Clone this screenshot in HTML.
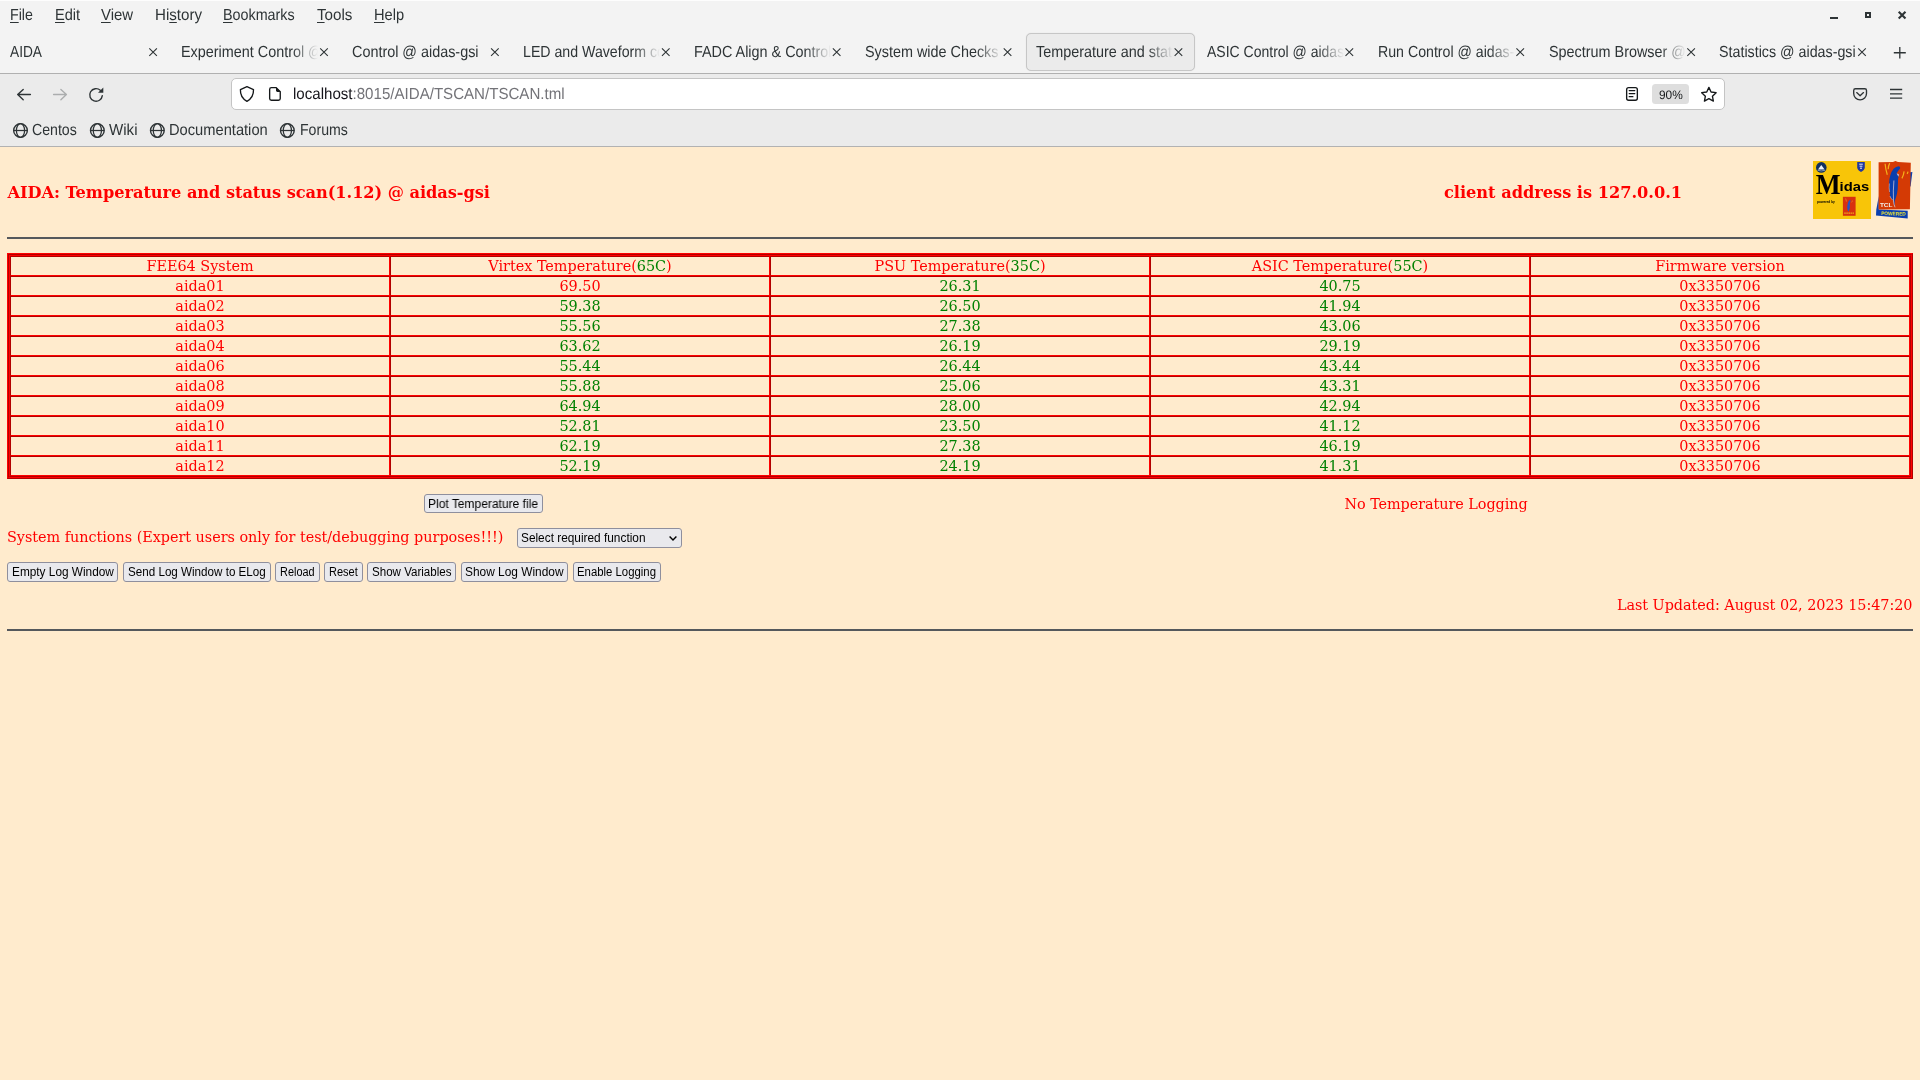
<!DOCTYPE html>
<html lang="en"><head><meta charset="utf-8"><title>Temperature and status scan @ aidas-gsi</title>
<style>
*{box-sizing:border-box;margin:0;padding:0}
html,body{width:1920px;height:1080px;overflow:hidden;background:#ffebcd}
body{position:relative;font-family:"Liberation Sans","DejaVu Sans",sans-serif;color:#2e3436}
.abs,.t,.s{position:absolute;white-space:nowrap}
.t{font-family:"Liberation Sans","DejaVu Sans",sans-serif;font-size:16px;line-height:20px;color:#2e3436;text-rendering:geometricPrecision}
.s{font-family:"DejaVu Serif","Liberation Serif",serif;font-size:14.4px;line-height:18px;color:#f00}
.g{color:#008000}
.tb{position:absolute;left:10px;top:256px;width:1900px;border-collapse:separate;border-spacing:0;table-layout:fixed;font-family:"DejaVu Serif","Liberation Serif",serif;font-size:14.4px;color:#f00}
.tb th,.tb td{width:380px;height:20px;padding:0;border:1px solid;border-color:#b20000 #ff0000 #ff0000 #b20000;text-align:center;vertical-align:top;line-height:18px;font-weight:normal;white-space:nowrap}
.tb td.g{color:#008000}
u{text-decoration:underline;text-underline-offset:2px;text-decoration-thickness:1px}
#w{position:absolute;left:0;top:0;width:1920px;height:1080px;will-change:transform}
#top{left:0;top:0;width:1920px;height:73px;background:#f3f3f3;border-top:1px solid #fdfdfd}
#tabline{left:0;top:73px;width:1920px;height:1px;background:#b0b0b0}
#nav{left:0;top:74px;width:1920px;height:72px;background:#ebebeb}
#navline{left:0;top:146px;width:1920px;height:1px;background:#b2b2b2}
#url{left:231px;top:78px;width:1494px;height:32px;background:#fff;border:1px solid #c4c4c4;border-radius:5px}
#acttab{left:1026px;top:33px;width:169px;height:38px;background:#ebebeb;border:1px solid #c6c6c6;border-radius:5px;box-shadow:0 0 1px rgba(0,0,0,.15)}
.lbl{overflow:hidden;height:22px}
.fade{-webkit-mask-image:linear-gradient(to right,#000 0,#000 calc(100% - 26px),transparent 100%);mask-image:linear-gradient(to right,#000 0,#000 calc(100% - 26px),transparent 100%)}
svg{position:absolute;overflow:visible}
.btn{position:absolute;display:block;-webkit-appearance:none;appearance:none;font:inherit;text-align:left;overflow:visible;cursor:default;background:#e9e9ed;border:1px solid #8f8f9d;border-radius:3px}
.btn span{position:absolute;transform-origin:0 0;white-space:nowrap;font-family:"Liberation Sans","DejaVu Sans",sans-serif;font-size:12.3px;line-height:16px;color:#000}
.hr{position:absolute;left:7px;width:1906px;height:2px;border:0;background:#55585c}
</style></head>
<body>
<div id="w">
<div class="abs" id="top"></div><div class="abs" id="tabline"></div><div class="abs" id="nav"></div><div class="abs" id="navline"></div>
<div class="t" style="left:10.4px;top:5.6px;font-size:16px;transform:scaleX(0.8883);transform-origin:0 0;"><u>F</u>ile</div>
<div class="t" style="left:54.6px;top:5.6px;font-size:16px;transform:scaleX(0.9104);transform-origin:0 0;"><u>E</u>dit</div>
<div class="t" style="left:101.2px;top:5.6px;font-size:16px;transform:scaleX(0.9334);transform-origin:0 0;"><u>V</u>iew</div>
<div class="t" style="left:154.8px;top:5.6px;font-size:16px;transform:scaleX(0.9442);transform-origin:0 0;">Hi<u>s</u>tory</div>
<div class="t" style="left:223.1px;top:5.6px;font-size:16px;transform:scaleX(0.8948);transform-origin:0 0;"><u>B</u>ookmarks</div>
<div class="t" style="left:316.7px;top:5.6px;font-size:16px;transform:scaleX(0.9478);transform-origin:0 0;"><u>T</u>ools</div>
<div class="t" style="left:374.0px;top:5.6px;font-size:16px;transform:scaleX(0.9148);transform-origin:0 0;"><u>H</u>elp</div>
<div class="abs" style="left:1830px;top:17px;width:8px;height:2px;background:#2e3436"></div><div class="abs" style="left:1865px;top:12px;width:6px;height:6px;border:2px solid #2e3436"></div>
<div class="abs" id="acttab"></div>
<div class="t lbl" style="left:10.4px;top:42.6px;width:137px"><span style="display:inline-block;transform:scaleX(0.857);transform-origin:0 0">AIDA</span></div>
<div class="t lbl fade" style="left:181.3px;top:42.6px;width:137px"><span style="display:inline-block;transform:scaleX(0.899);transform-origin:0 0">Experiment Control @ aidas-gsi</span></div>
<div class="t lbl" style="left:352.2px;top:42.6px;width:137px"><span style="display:inline-block;transform:scaleX(0.899);transform-origin:0 0">Control @ aidas-gsi</span></div>
<div class="t lbl fade" style="left:523.1px;top:42.6px;width:137px"><span style="display:inline-block;transform:scaleX(0.885);transform-origin:0 0">LED and Waveform control @ aidas-gsi</span></div>
<div class="t lbl fade" style="left:694.0px;top:42.6px;width:137px"><span style="display:inline-block;transform:scaleX(0.899);transform-origin:0 0">FADC Align &amp; Control @ aidas-gsi</span></div>
<div class="t lbl fade" style="left:864.9px;top:42.6px;width:137px"><span style="display:inline-block;transform:scaleX(0.899);transform-origin:0 0">System wide Checks @ aidas-gsi</span></div>
<div class="t lbl fade" style="left:1035.8px;top:42.6px;width:137px"><span style="display:inline-block;transform:scaleX(0.899);transform-origin:0 0">Temperature and status scan @ aidas-gsi</span></div>
<div class="t lbl fade" style="left:1206.7px;top:42.6px;width:137px"><span style="display:inline-block;transform:scaleX(0.875);transform-origin:0 0">ASIC Control @ aidas-gsi</span></div>
<div class="t lbl fade" style="left:1377.6px;top:42.6px;width:137px"><span style="display:inline-block;transform:scaleX(0.885);transform-origin:0 0">Run Control @ aidas-gsi</span></div>
<div class="t lbl fade" style="left:1548.5px;top:42.6px;width:137px"><span style="display:inline-block;transform:scaleX(0.899);transform-origin:0 0">Spectrum Browser @ aidas-gsi</span></div>
<div class="t lbl" style="left:1719.4px;top:42.6px;width:137px"><span style="display:inline-block;transform:scaleX(0.892);transform-origin:0 0">Statistics @ aidas-gsi</span></div>
<div class="abs" id="url"></div>
<div class="abs" style="left:1652px;top:84px;width:37px;height:20px;background:#dedede;border-radius:3.5px"></div><div class="t" style="left:292.9px;top:85.3px;font-size:16px;transform:scaleX(0.9428);transform-origin:0 0;color:#15141a;">localhost<span style="color:#737378">:8015/AIDA/TSCAN/TSCAN.tml</span></div>
<div class="t" style="left:1658.9px;top:85.2px;font-size:12.3px;transform:scaleX(0.9668);transform-origin:0 0;color:#15181a;">90%</div>
<svg style="left:0;top:0" width="1920" height="147" viewBox="0 0 1920 147"><path d="M1898.7 11.8 L1905.5 18.6 M1905.5 11.8 L1898.7 18.6" stroke="#2e3436" stroke-width="2.1" fill="none" />
<path d="M149.30 48.30 L156.90 55.90 M156.90 48.30 L149.30 55.90" stroke="#2e3436" stroke-width="1.1" fill="none" />
<path d="M320.19 48.30 L327.79 55.90 M327.79 48.30 L320.19 55.90" stroke="#2e3436" stroke-width="1.1" fill="none" />
<path d="M491.08 48.30 L498.68 55.90 M498.68 48.30 L491.08 55.90" stroke="#2e3436" stroke-width="1.1" fill="none" />
<path d="M661.97 48.30 L669.57 55.90 M669.57 48.30 L661.97 55.90" stroke="#2e3436" stroke-width="1.1" fill="none" />
<path d="M832.86 48.30 L840.46 55.90 M840.46 48.30 L832.86 55.90" stroke="#2e3436" stroke-width="1.1" fill="none" />
<path d="M1003.75 48.30 L1011.35 55.90 M1011.35 48.30 L1003.75 55.90" stroke="#2e3436" stroke-width="1.1" fill="none" />
<path d="M1174.64 48.30 L1182.24 55.90 M1182.24 48.30 L1174.64 55.90" stroke="#2e3436" stroke-width="1.1" fill="none" />
<path d="M1345.53 48.30 L1353.13 55.90 M1353.13 48.30 L1345.53 55.90" stroke="#2e3436" stroke-width="1.1" fill="none" />
<path d="M1516.42 48.30 L1524.02 55.90 M1524.02 48.30 L1516.42 55.90" stroke="#2e3436" stroke-width="1.1" fill="none" />
<path d="M1687.31 48.30 L1694.91 55.90 M1694.91 48.30 L1687.31 55.90" stroke="#2e3436" stroke-width="1.1" fill="none" />
<path d="M1858.20 48.30 L1865.80 55.90 M1865.80 48.30 L1858.20 55.90" stroke="#2e3436" stroke-width="1.1" fill="none" />
<path d="M1899.8 46.9 V58.6 M1893.8 52.75 H1905.8" stroke="#2e3436" stroke-width="1.3" fill="none" />
<path d="M30.4 94.5 H17.8 M23.2 89.4 L17.7 94.5 L23.2 99.7" stroke="#2e3436" stroke-width="1.4" fill="none" stroke-linecap="round" stroke-linejoin="round"/>
<path d="M53.6 94.5 H66.3 M60.9 89.4 L66.4 94.5 L60.9 99.7" stroke="#abadae" stroke-width="1.4" fill="none" stroke-linecap="round" stroke-linejoin="round"/>
<path d="M102.3 95.6 A6.3 6.3 0 1 1 100.3 90.3" stroke="#2e3436" stroke-width="1.4" fill="none" stroke-linecap="round"/>
<path d="M103.3 87.5 V92.7 H98.0 Z" stroke="#2e3436" stroke-width="0" fill="#2e3436" />
<path d="M246.95 86.7 L253.5 89.6 C253.7 95 251.6 98.9 246.95 101.3 C242.3 98.9 240.2 95 240.4 89.6 Z" stroke="#15181a" stroke-width="1.35" fill="none" stroke-linejoin="round"/>
<path d="M271.4 87.65 H276.2 L280.25 91.7 V98.5 Q280.25 100.25 278.5 100.25 H271.4 Q269.65 100.25 269.65 98.5 V89.4 Q269.65 87.65 271.4 87.65 Z" stroke="#15181a" stroke-width="1.35" fill="none" stroke-linejoin="round"/>
<path d="M276 87.3 L280.6 91.9 H277.4 Q276 91.9 276 90.5 Z" stroke="#2e3436" stroke-width="0" fill="#15181a" />
<rect x="1626.65" y="87.65" width="10.7" height="12.6" rx="2" stroke="#15181a" stroke-width="1.35" fill="none"/>
<path d="M1629.2 90.5 H1634.8 M1629.2 93.6 H1634.8 M1629.2 96.7 H1632.9" stroke="#15181a" stroke-width="1.25" fill="none" stroke-linecap="round"/>
<path d="M1708.90 87.40 L1711.07 92.01 L1716.13 92.65 L1712.42 96.14 L1713.37 101.15 L1708.90 98.70 L1704.43 101.15 L1705.38 96.14 L1701.67 92.65 L1706.73 92.01 Z" stroke="#15181a" stroke-width="1.35" fill="none" stroke-linejoin="round"/>
<path d="M1855.4 88.7 H1864.8 Q1866.5 88.7 1866.5 90.4 V93.5 A6.4 6.4 0 0 1 1853.7 93.5 V90.4 Q1853.7 88.7 1855.4 88.7 Z" stroke="#2e3436" stroke-width="1.35" fill="none" />
<path d="M1856.7 92.6 L1860.1 95.7 L1863.5 92.6" stroke="#2e3436" stroke-width="1.35" fill="none" stroke-linecap="round" stroke-linejoin="round"/>
<path d="M1890 89.5 H1902.2 M1890 93.85 H1902.2 M1890 98.2 H1902.2" stroke="#2e3436" stroke-width="1.3" fill="none" />
<g stroke="#2e3436" fill="none"><circle cx="20.50" cy="130.5" r="6.85" stroke-width="1.4"/><ellipse cx="20.50" cy="130.5" rx="4.1" ry="6.85" stroke-width="1.25"/><path d="M13.65 130.5 H27.35" stroke-width="1.25"/></g>
<g stroke="#2e3436" fill="none"><circle cx="97.35" cy="130.5" r="6.85" stroke-width="1.4"/><ellipse cx="97.35" cy="130.5" rx="4.1" ry="6.85" stroke-width="1.25"/><path d="M90.50 130.5 H104.20" stroke-width="1.25"/></g>
<g stroke="#2e3436" fill="none"><circle cx="157.35" cy="130.5" r="6.85" stroke-width="1.4"/><ellipse cx="157.35" cy="130.5" rx="4.1" ry="6.85" stroke-width="1.25"/><path d="M150.50 130.5 H164.20" stroke-width="1.25"/></g>
<g stroke="#2e3436" fill="none"><circle cx="287.35" cy="130.5" r="6.85" stroke-width="1.4"/><ellipse cx="287.35" cy="130.5" rx="4.1" ry="6.85" stroke-width="1.25"/><path d="M280.50 130.5 H294.20" stroke-width="1.25"/></g></svg>
<div class="t" style="left:32.0px;top:121.4px;font-size:16px;transform:scaleX(0.8838);transform-origin:0 0;">Centos</div>
<div class="t" style="left:108.7px;top:121.4px;font-size:16px;transform:scaleX(0.9433);transform-origin:0 0;">Wiki</div>
<div class="t" style="left:169.0px;top:121.4px;font-size:16px;transform:scaleX(0.9172);transform-origin:0 0;">Documentation</div>
<div class="t" style="left:299.5px;top:121.4px;font-size:16px;transform:scaleX(0.8816);transform-origin:0 0;">Forums</div>

<h2 class="s" style="left:7.4px;top:181px;font-size:16.2px;font-weight:bold;line-height:24px;letter-spacing:-0.045px">AIDA: Temperature and status scan(1.12) @ aidas-gsi</h2>
<div class="s" style="left:1444px;top:181px;font-size:16.2px;font-weight:bold;line-height:24px;letter-spacing:-0.02px">client address is 127.0.0.1</div>
<hr class="hr" style="top:237px">
<svg style="left:1813px;top:161px" width="58" height="58" viewBox="0 0 58 58"><rect width="58" height="58" fill="#f8c508"/>
<circle cx="8.3" cy="6.4" r="5.3" fill="#12305f"/><path d="M5 8.6 L8.3 4 L11.6 8.6 Z" fill="#eef2f6"/><path d="M4.6 9.3 Q8.3 10.6 12 9.3" stroke="#9fb0c4" stroke-width="0.8" fill="none"/>
<path d="M44.2 1.1 H51.8 V6.6 Q51.6 9.4 48 10.9 Q44.4 9.4 44.2 6.6 Z" fill="#2038a0"/><path d="M46.2 3.2 H49.8 M46.6 5.2 H49.4 M47 7.2 H49" stroke="#e6ebf7" stroke-width="1"/>
<text x="2.7" y="32.5" font-family="'Liberation Serif','DejaVu Serif',serif" font-weight="bold" font-size="28.7" fill="#000" textLength="24.8" lengthAdjust="spacingAndGlyphs">M</text>
<text x="26.6" y="29.7" font-family="'Liberation Sans','DejaVu Sans',sans-serif" font-weight="bold" font-size="12.6" fill="#000" textLength="29.6" lengthAdjust="spacingAndGlyphs">idas</text>
<text transform="translate(4.1 41.6) scale(0.2)" font-family="'Liberation Sans','DejaVu Sans',sans-serif" font-weight="bold" font-size="17" fill="#000" textLength="89" lengthAdjust="spacingAndGlyphs">powered by</text>
<rect x="29.9" y="35.8" width="12.7" height="19" fill="#d8310f"/><path d="M37.2 38.8 Q35.4 39.6 34.8 42.5 Q33.8 46 34.6 49 L35.6 50.6 Q37.4 46.5 36.8 42.4 Q37.8 40.6 37.2 38.8 Z" fill="#2354c8"/><path d="M31.2 52.1 H41" stroke="#efa81a" stroke-width="1.2" stroke-dasharray="1.6 0.5"/><path d="M32.6 37.4 Q33.2 39 33.4 40.6 M39.4 39.6 Q39.2 40.6 38.6 41.4" stroke="#f0a020" stroke-width="0.6" fill="none"/>
</svg>
<svg style="left:1876px;top:161px" width="37" height="58" viewBox="0 0 37 58">
<path d="M2.8 35 L2.8 48.6 L31.7 49.8 L31.7 57.4 L0 54.6 L0.3 48.6 Z" fill="#0a3fb0"/><path d="M34 11.2 L36.4 10.9 L34.6 25.5 L34 25.5 Z" fill="#0a3fb0"/>
<path d="M2.6 1.2 L17 0.9 L19.4 0.1 L22 0.9 L34.8 1.8 L33.9 48.2 L2.6 48.5 Z" fill="#d43a05"/>
<path d="M22.9 5.2 Q24.6 5.6 24.1 7.4 Q22.2 9.4 20.6 12.2 L23 13.6 Q21.6 18 21.9 23.5 Q22 28.5 21 32.8 Q20.2 36.5 18.7 40 L18.9 46.2 Q18 42.5 17.2 39.4 Q14.6 37.5 13.8 35 Q14.4 32.5 13.3 30 Q12.6 26 13.1 22.3 Q13.2 18 14.3 14.3 Q15.4 10.4 17.6 7.8 Q20 5.2 22.9 5.2 Z" fill="#0a3fad"/>
<path d="M17.9 19.5 Q17 30 17.5 40 Q17.9 43.5 19 46.3" stroke="#e6d6d8" stroke-width="0.7" fill="none"/>
<path d="M20.6 12.2 L23 13.6 L22.4 15.8 Z" fill="#e8c9c2"/>
<path d="M13.4 22.5 Q12.8 27 13.6 31 M13.9 35 Q14.8 37.5 16.6 39" stroke="#e7b9ac" stroke-width="0.6" fill="none"/>
<path d="M9.1 2.7 Q9.6 8.5 11.3 13.7 M13.7 2.1 Q12.2 5 12.2 8.2 M28.1 10.4 Q27.6 14.5 25.9 17.4 M32 10.7 Q31.8 11.9 31.1 12.8" stroke="#f5b01a" stroke-width="1.2" fill="none"/>
<text transform="translate(3.9 45.9) scale(0.2)" font-family="'Liberation Sans','DejaVu Sans',sans-serif" font-weight="bold" font-size="26" fill="#f2ecea" textLength="63" lengthAdjust="spacingAndGlyphs">TCL</text>
<text transform="translate(5.2 54) rotate(1.5) scale(0.2)" font-family="'Liberation Sans','DejaVu Sans',sans-serif" font-weight="bold" font-size="25" fill="#e9e337" textLength="123" lengthAdjust="spacingAndGlyphs">POWERED</text>
</svg>
<div class="abs" style="left:7px;top:253px;width:1906px;height:226px;border:1px solid;border-color:#ff0000 #b20000 #b20000 #ff0000"></div><div class="abs" style="left:8px;top:254px;width:1904px;height:224px;border:1px solid;border-color:#b20000 #ff0000 #ff0000 #b20000"></div><div class="abs" style="left:9px;top:255px;width:1902px;height:222px;border:1px solid;border-color:#ff0000 #b20000 #b20000 #ff0000"></div>
<table class="tb"><tr><th>FEE64 System</th><th>Virtex Temperature(<span class="g">65C</span>)</th><th>PSU Temperature(<span class="g">35C</span>)</th><th>ASIC Temperature(<span class="g">55C</span>)</th><th>Firmware version</th></tr>
<tr><td>aida01</td><td>69.50</td><td class="g">26.31</td><td class="g">40.75</td><td>0x3350706</td></tr>
<tr><td>aida02</td><td class="g">59.38</td><td class="g">26.50</td><td class="g">41.94</td><td>0x3350706</td></tr>
<tr><td>aida03</td><td class="g">55.56</td><td class="g">27.38</td><td class="g">43.06</td><td>0x3350706</td></tr>
<tr><td>aida04</td><td class="g">63.62</td><td class="g">26.19</td><td class="g">29.19</td><td>0x3350706</td></tr>
<tr><td>aida06</td><td class="g">55.44</td><td class="g">26.44</td><td class="g">43.44</td><td>0x3350706</td></tr>
<tr><td>aida08</td><td class="g">55.88</td><td class="g">25.06</td><td class="g">43.31</td><td>0x3350706</td></tr>
<tr><td>aida09</td><td class="g">64.94</td><td class="g">28.00</td><td class="g">42.94</td><td>0x3350706</td></tr>
<tr><td>aida10</td><td class="g">52.81</td><td class="g">23.50</td><td class="g">41.12</td><td>0x3350706</td></tr>
<tr><td>aida11</td><td class="g">62.19</td><td class="g">27.38</td><td class="g">46.19</td><td>0x3350706</td></tr>
<tr><td>aida12</td><td class="g">52.19</td><td class="g">24.19</td><td class="g">41.31</td><td>0x3350706</td></tr>
</table>
<button type="button" class="btn" style="left:424px;top:494px;width:119px;height:19px"><span style="left:3.40px;top:1.0px;transform:scaleX(0.9772)">Plot Temperature file</span></button>
<div class="s" style="left:1344.5px;top:495px;letter-spacing:-0.06px">No Temperature Logging</div>
<div class="s" style="left:7px;top:528px;letter-spacing:-0.027px">System functions (Expert users only for test/debugging purposes!!!)</div>
<button type="button" class="btn" style="left:517px;top:528px;width:165px;height:20px"><span style="left:3.40px;top:1.0px;transform:scaleX(0.9635)">Select required function</span></button><svg style="left:669px;top:536.2px" width="8" height="5" viewBox="0 0 8 5"><path d="M0.6 0.6 L4 4.1 L7.4 0.6" stroke="#000" stroke-width="1.4" fill="none"/></svg>
<button type="button" class="btn" style="left:7px;top:562px;width:111px;height:20px"><span style="left:3.90px;top:1.0px;transform:scaleX(0.9617)">Empty Log Window</span></button><button type="button" class="btn" style="left:123px;top:562px;width:148px;height:20px"><span style="left:3.90px;top:1.0px;transform:scaleX(0.9462)">Send Log Window to ELog</span></button><button type="button" class="btn" style="left:275px;top:562px;width:45px;height:20px"><span style="left:4.20px;top:1.0px;transform:scaleX(0.8877)">Reload</span></button><button type="button" class="btn" style="left:324px;top:562px;width:39px;height:20px"><span style="left:4.00px;top:1.0px;transform:scaleX(0.8964)">Reset</span></button><button type="button" class="btn" style="left:367px;top:562px;width:89px;height:20px"><span style="left:3.80px;top:1.0px;transform:scaleX(0.9403)">Show Variables</span></button><button type="button" class="btn" style="left:461px;top:562px;width:107px;height:20px"><span style="left:3.30px;top:1.0px;transform:scaleX(0.9669)">Show Log Window</span></button><button type="button" class="btn" style="left:573px;top:562px;width:88px;height:20px"><span style="left:3.40px;top:1.0px;transform:scaleX(0.9241)">Enable Logging</span></button>
<div class="s" style="right:7.5px;top:596px;letter-spacing:-0.04px">Last Updated: August 02, 2023 15:47:20</div>
<hr class="hr" style="top:629px">
</div>
</body></html>
